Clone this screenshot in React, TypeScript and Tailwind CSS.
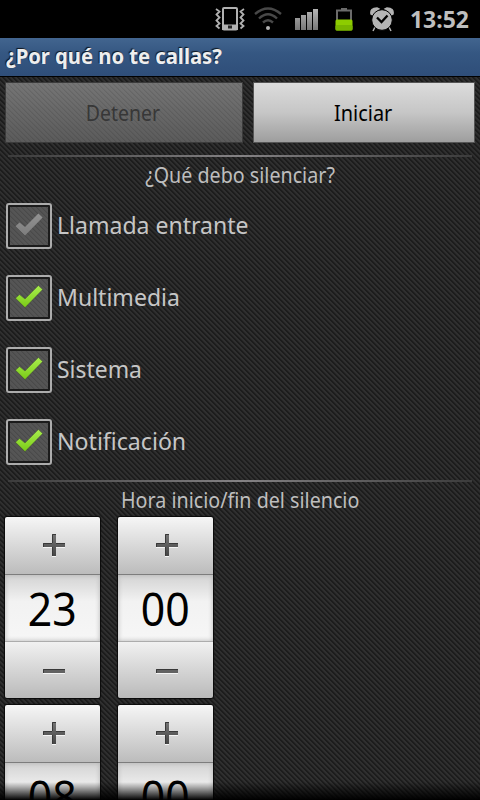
import * as React from 'react';

interface CheckOption {
    label: string;
    width: string;
    disabled?: boolean;
}

const options: CheckOption[] = [
    { label: 'Llamada entrante', width: 'scale-x-[0.96]', disabled: true },
    { label: 'Multimedia', width: 'scale-x-[0.96]' },
    { label: 'Sistema', width: 'scale-x-[0.955]' },
    { label: 'Notificación', width: 'scale-x-[0.963]' },
];

function StatusBar() {
    return (
        <div className="h-[38px] shrink-0 bg-black flex items-center justify-end pr-[11px] text-[#bebebe]">
            {/* vibrate */}
            <svg width="30" height="24" viewBox="0 0 30 24" className="mr-[9px]" fill="none" stroke="#b0b0b0">
                <rect x="8" y="1" width="14" height="21.5" rx="1" strokeWidth="2" />
                <path d="M7 17.5h16v5.5h-16z" fill="#b0b0b0" stroke="none" />
                <rect x="13" y="18.5" width="4" height="3" fill="#222" stroke="none" />
                <path d="M1 2l3.500 2.500-3 3 3 3-3 3 3 3-3 2.500 3 2.500M29 2l-3.500 2.500 3 3-3 3 3 3-3 3 3 2.500-3 2.500" strokeWidth="1.8" />
            </svg>
            {/* wifi */}
            <svg width="28" height="24" viewBox="0 0 28 24" className="mr-[13px]" fill="none" stroke="#484848" strokeWidth="2.4">
                <path d="M1 7Q14 -4 27 7M5 11.500Q14 3 23 11.500M9 15.500Q14 11 19 15.500" />
                <circle cx="14" cy="21" r="2" fill="#b4b4b4" stroke="none" />
            </svg>
            {/* signal */}
            <svg width="24" height="24" viewBox="0 0 24 24" className="mr-[16px]">
                <defs>
                    <linearGradient id="bars" x1="0" y1="0" x2="0" y2="1">
                        <stop offset="0" stopColor="#b4b4b4" />
                        <stop offset="1" stopColor="#777" />
                    </linearGradient>
                </defs>
                <path d="M0 12h5v12H0zM6 9h5v15H6zM12 6h5v18h-5zM18 3h5v21h-5z" transform="translate(0 -1)" fill="url(#bars)" />
            </svg>
            {/* battery */}
            <svg width="18" height="24" viewBox="0 0 18 24" className="mr-[17px]">
                <path d="M2 13V3.500h14v10M6 2h6" fill="none" stroke="#6b6b6b" strokeWidth="2" />
                <rect x="0.5" y="12.500" width="17" height="11" rx="1.500" fill="#8dcc00" />
                <rect x="0.5" y="18" width="17" height="5.500" rx="1.500" fill="#79b500" />
            </svg>
            {/* alarm */}
            <svg width="24" height="25" viewBox="0 0 24 25" className="mr-[16px]">
                <path d="M1 7Q0 1 7 1L9 2 3 8ZM23 7Q24 1 17 1L15 2 21 8ZM5 20l-2 4M19 20l2 4" fill="#b4b4b4" stroke="#b4b4b4" strokeWidth="1.500" />
                <circle cx="12" cy="13" r="10.300" fill="#b4b4b4" stroke="#000" strokeWidth="1" />
                <path d="M7 10.500l4.500 4.500 6-6.500" fill="none" stroke="#000" strokeWidth="2.300" />
            </svg>
            <span className="w-[59px] text-[24px] leading-[38px] font-bold whitespace-nowrap">
                <span className="inline-block origin-left scale-x-[0.955]">13:52</span>
            </span>
        </div>
    );
}

function Divider() {
    return <div className="mx-2 h-[2px] shrink-0 bg-linear-to-r from-[#3c3c3c] via-[#858385] to-[#3c3c3c]" />;
}

function SectionTitle({ children }: { children: React.ReactNode }) {
    return (
        <div className="shrink-0 text-center text-[22px] leading-[35px] h-[33px] text-[#bebebe]">
            <span className="inline-block scale-x-[0.895]">{children}</span>
        </div>
    );
}

function CheckRow({ option }: { option: CheckOption }) {
    return (
        <div className="flex h-[72px] items-center pl-[6px]">
            <div className="flex h-[46px] w-[46px] shrink-0 items-center justify-center rounded-[3px] border-2 border-[#acacac] bg-[#1b1b1b]">
                <div className="h-[38px] w-[38px] bg-[#555555] bg-[repeating-linear-gradient(45deg,#00000020_0px,#00000020_1.2px,transparent_1.6px,transparent_3.536px)] bg-size-[5px_5px]">
                    <svg width="38" height="38" viewBox="0 0 38 38">
                        <defs>
                            <linearGradient id="green" x1="0" y1="0" x2="0" y2="1">
                                <stop offset="0" stopColor="#a9ee4e" />
                                <stop offset="1" stopColor="#7acb16" />
                            </linearGradient>
                            <linearGradient id="grey" x1="0" y1="0" x2="0" y2="1">
                                <stop offset="0" stopColor="#929292" />
                                <stop offset="1" stopColor="#7d7d7d" />
                            </linearGradient>
                        </defs>
                        <path
                            d="M5.500 19.200L9.500 15.600L15 20L28.400 6.600L32.600 10.600L15 28.600Z"
                            fill={option.disabled ? 'url(#grey)' : 'url(#green)'}
                            stroke={option.disabled ? 'none' : '#3c4a2c'}
                            strokeWidth="0.4"
                        />
                    </svg>
                </div>
            </div>
            <span className={'ml-[5px] mb-[2px] inline-block origin-left text-[24px] leading-[32px] whitespace-nowrap text-[#c6c6c6] ' + option.width}>
                {option.label}
            </span>
        </div>
    );
}

function PickerButton({ kind }: { kind: 'plus' | 'minus' }) {
    return (
        <svg width="24" height="24" viewBox="0 0 24 24">
            <defs>
                <linearGradient id="sign" x1="0" y1="0" x2="0" y2="1">
                    <stop offset="0" stopColor="#757575" />
                    <stop offset="1" stopColor="#454545" />
                </linearGradient>
            </defs>
            {kind === 'plus' ? (
                <>
                    <path d="M10 1h4v9h9v4h-9v9h-4v-9H1v-4h9z" fill="#f4f4f4" />
                    <path d="M10 0h4v9h9v4h-9v9h-4v-9H1v-4h9z" fill="url(#sign)" />
                    <path d="M10.500 22V13M10 9.500H1.500V13M10.500 9V0.500H14M14 9.500h9" fill="none" stroke="#393939" />
                </>
            ) : (
                <>
                    <path d="M1 12h22v4H1z" fill="#f4f4f4" />
                    <path d="M1 11h22v4H1z" fill="#626262" />
                    <path d="M1.500 15V11.500H23" fill="none" stroke="#393939" />
                </>
            )}
        </svg>
    );
}

function NumberPicker({ value }: { value: string }) {
    return (
        <div className="w-[95px] h-[181px] shrink-0 rounded-[2px] overflow-hidden shadow-[0_0_1px_1px_#0b0b0b]">
            <button className="flex h-[57px] w-full items-center justify-center pl-[3px] bg-linear-to-b from-[#f6f6f6] to-[#bcbcbc]">
                <PickerButton kind="plus" />
            </button>
            <div className="h-[68px] border-t border-[#7d7d7d] border-b border-b-[#acacac] bg-linear-to-b from-[#d3d3d3] via-[#f2f2f2] via-40% to-[#f6f6f6] text-center text-[46px] leading-[67px] text-black shadow-[inset_0_0_5px_#b5b5b5]">
                <span className="inline-block scale-x-[0.93]">{value}</span>
            </div>
            <button className="flex h-[56px] w-full items-center justify-center pl-[3px] bg-linear-to-b from-[#f1f1f1] to-[#bababa]">
                <PickerButton kind="minus" />
            </button>
        </div>
    );
}

export default function App() {
    return (
        <div className="relative flex h-[800px] w-[480px] flex-col overflow-hidden bg-[#2b2b2b] bg-[repeating-linear-gradient(45deg,#1c1c1c_0px,#1c1c1c_1px,#2f2f2f_1.7px,#2f2f2f_2.9px,#1c1c1c_3.536px)] bg-size-[5px_5px] font-['Noto_Sans','Open_Sans',sans-serif]">
            <StatusBar />
            <header className="h-[39px] shrink-0 border-b border-black bg-linear-to-b from-[#42658f] via-[#355782] via-40% to-[#2f4e79] pl-[6px] text-[22px] leading-[35px] font-bold whitespace-nowrap text-[#eeeeee] [text-shadow:-1px_-1px_1px_#101820]">
                <span className="inline-block origin-left scale-x-[0.918]">¿Por qué no te callas?</span>
            </header>

            <div className="flex h-[78px] shrink-0 gap-[11px] pt-[5px] pl-[5px]">
                <button disabled className="h-[61px] w-[238px] border border-[#3b3b3b] bg-linear-to-b from-[#757575] to-[#5b5b5b] text-[22px] text-[#373737]">
                    <div className="flex h-full items-center justify-center bg-[repeating-linear-gradient(45deg,#00000018_0px,#00000018_1.2px,transparent_1.6px,transparent_3.536px)] bg-size-[5px_5px]">
                        <span className="inline-block -translate-x-[1px] scale-x-[0.885]">Detener</span>
                    </div>
                </button>
                <button className="h-[61px] w-[222px] -ml-px border border-[#555] bg-linear-to-b from-[#dcdcdc] via-[#c6c6c6] to-[#9e9e9e] text-[22px] text-black">
                    <span className="inline-block -translate-x-[1px] scale-x-[0.905]">Iniciar</span>
                </button>
            </div>

            <Divider />
            <SectionTitle>¿Qué debo silenciar?</SectionTitle>
            <div className="h-[290px] shrink-0">
                {options.map((option) => <CheckRow key={option.label} option={option} />)}
            </div>

            <Divider />
            <SectionTitle>Hora inicio/fin del silencio</SectionTitle>
            <div className="grid shrink-0 grid-cols-[95px_95px] gap-x-[18px] gap-y-[7px] pt-[2px] pl-[5px]">
                <NumberPicker value="23" />
                <NumberPicker value="00" />
                <NumberPicker value="08" />
                <NumberPicker value="00" />
            </div>

            {/* fading edge of the scroll view */}
            <div className="pointer-events-none absolute inset-x-0 bottom-0 h-[18px] bg-linear-to-b from-transparent to-black" />
        </div>
    );
}
